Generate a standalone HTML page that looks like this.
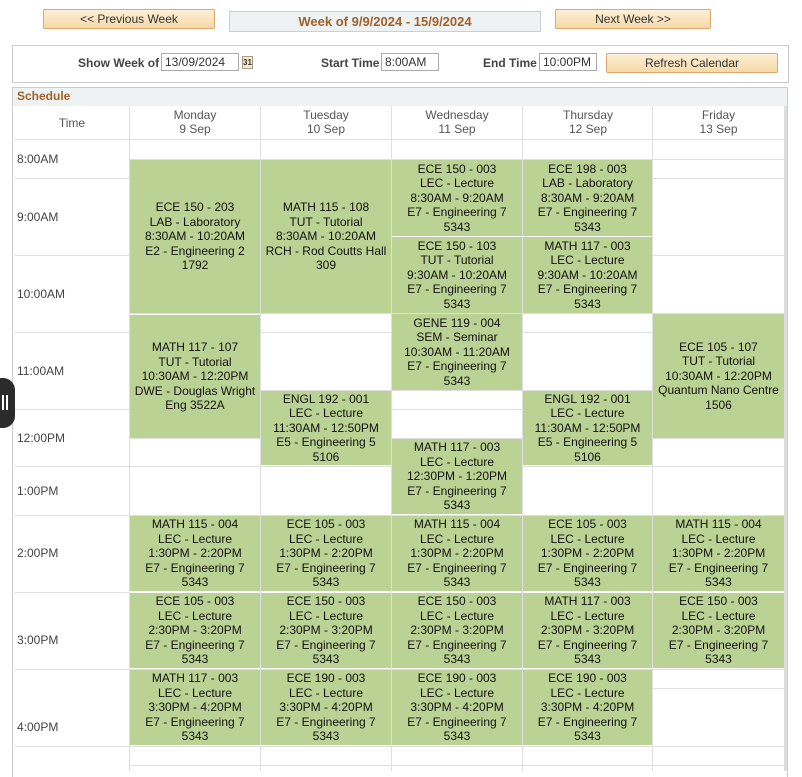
<!DOCTYPE html>
<html><head><meta charset="utf-8"><style>
*{box-sizing:border-box;margin:0;padding:0}
body{width:802px;height:771px;overflow:hidden;background:#fff;font-family:"Liberation Sans",Arial,sans-serif;position:relative;color:#333}
.btn{position:absolute;height:20px;background:linear-gradient(#fdf0d8,#f7d9a8);border:1px solid #e0a66a;border-radius:2px;font-size:12px;text-align:center;line-height:18px;color:#333}
.abs{position:absolute}
.lbl{position:absolute;font-size:12px;font-weight:bold;color:#444}
.inp{position:absolute;height:18px;border:1px solid #aaa;font-size:12px;line-height:16px;padding-left:3px;color:#333}
.hl{position:absolute;height:1px;background:#dfdfdf}
.vl{position:absolute;width:1px;background:#dfdfdf}
.ev{position:absolute;background:#bad293;display:flex;flex-direction:column;justify-content:center;align-items:center;font-size:12px;line-height:14.5px;color:#111;text-align:center}
.t{position:absolute;left:17px;font-size:12px;color:#444}
.dh{position:absolute;top:108px;font-size:12px;line-height:14px;color:#555;text-align:center}
</style></head><body>
<div class="btn" style="left:43px;top:9px;width:172px">&lt;&lt; Previous Week</div>
<div class="abs" style="left:229px;top:11px;width:312px;height:21px;background:#eff2f3;border:1px solid #ccd;text-align:center;font-size:13px;font-weight:bold;color:#a0612a;line-height:19px">Week of 9/9/2024 - 15/9/2024</div>
<div class="btn" style="left:555px;top:9px;width:156px">Next Week &gt;&gt;</div>

<div class="abs" style="left:12px;top:45px;width:777px;height:38px;border:1px solid #ccc"></div>
<div class="lbl" style="left:78px;top:56px">Show Week of</div>
<div class="inp" style="left:161px;top:53px;width:78px">13/09/2024</div>
<div class="abs" style="left:242px;top:56px;width:11px;height:13px;border:1px solid #a98;background:#f4edc4;font-size:8px;font-weight:bold;line-height:11px;text-align:center">31</div>
<div class="lbl" style="left:321px;top:56px">Start Time</div>
<div class="inp" style="left:381px;top:53px;width:58px">8:00AM</div>
<div class="lbl" style="left:483px;top:56px">End Time</div>
<div class="inp" style="left:539px;top:53px;width:58px">10:00PM</div>
<div class="btn" style="left:606px;top:53px;width:172px;height:20px">Refresh Calendar</div>

<div class="abs" style="left:12px;top:87px;width:776px;height:690px;border:1px solid #ccc;border-bottom:none"></div>
<div class="abs" style="left:13px;top:88px;width:774px;height:18px;background:#eff2f3"></div>
<div class="abs" style="left:17px;top:89px;font-size:12px;font-weight:bold;color:#a0612a">Schedule</div>
<div class="abs" style="left:784px;top:106px;width:3px;height:665px;background:#ddd"></div>

<div class="vl" style="left:129px;top:106px;height:665px"></div>
<div class="vl" style="left:260px;top:106px;height:665px"></div>
<div class="vl" style="left:391px;top:106px;height:665px"></div>
<div class="vl" style="left:522px;top:106px;height:665px"></div>
<div class="vl" style="left:652px;top:106px;height:665px"></div>

<div class="hl" style="left:15px;width:114px;top:139px"></div>
<div class="hl" style="left:15px;width:114px;top:178px"></div>
<div class="hl" style="left:15px;width:114px;top:255px"></div>
<div class="hl" style="left:15px;width:114px;top:332px"></div>
<div class="hl" style="left:15px;width:114px;top:409px"></div>
<div class="hl" style="left:15px;width:114px;top:466px"></div>
<div class="hl" style="left:15px;width:114px;top:515px"></div>
<div class="hl" style="left:15px;width:114px;top:592px"></div>
<div class="hl" style="left:15px;width:114px;top:669px"></div>
<div class="hl" style="left:15px;width:114px;top:746px"></div>
<div class="hl" style="left:129px;width:655px;top:139px"></div>
<div class="hl" style="left:129px;width:655px;top:159px"></div>
<div class="hl" style="left:129px;width:655px;top:178px"></div>
<div class="hl" style="left:129px;width:655px;top:255px"></div>
<div class="hl" style="left:129px;width:655px;top:313px"></div>
<div class="hl" style="left:129px;width:655px;top:332px"></div>
<div class="hl" style="left:129px;width:655px;top:390px"></div>
<div class="hl" style="left:129px;width:655px;top:409px"></div>
<div class="hl" style="left:129px;width:655px;top:438px"></div>
<div class="hl" style="left:129px;width:655px;top:466px"></div>
<div class="hl" style="left:129px;width:655px;top:515px"></div>
<div class="hl" style="left:129px;width:655px;top:669px"></div>
<div class="hl" style="left:129px;width:655px;top:688px"></div>
<div class="hl" style="left:129px;width:655px;top:746px"></div>
<div class="hl" style="left:129px;width:655px;top:765px"></div>

<div class="dh" style="left:15px;width:114px;top:116px">Time</div>
<div class="dh" style="left:130px;width:130px">Monday<br>9 Sep</div>
<div class="dh" style="left:261px;width:130px">Tuesday<br>10 Sep</div>
<div class="dh" style="left:392px;width:130px">Wednesday<br>11 Sep</div>
<div class="dh" style="left:523px;width:130px">Thursday<br>12 Sep</div>
<div class="dh" style="left:653px;width:131px">Friday<br>13 Sep</div>

<div class="t" style="top:152px">8:00AM</div>
<div class="t" style="top:210px">9:00AM</div>
<div class="t" style="top:287px">10:00AM</div>
<div class="t" style="top:364px">11:00AM</div>
<div class="t" style="top:431px">12:00PM</div>
<div class="t" style="top:484px">1:00PM</div>
<div class="t" style="top:546px">2:00PM</div>
<div class="t" style="top:633px">3:00PM</div>
<div class="t" style="top:720px">4:00PM</div>

<div class="ev" style="left:130px;width:130px;top:160px;height:153px">ECE 150 - 203<br>LAB - Laboratory<br>8:30AM - 10:20AM<br>E2 - Engineering 2<br>1792</div>
<div class="ev" style="left:130px;width:130px;top:315px;height:123px">MATH 117 - 107<br>TUT - Tutorial<br>10:30AM - 12:20PM<br>DWE - Douglas Wright<br>Eng 3522A</div>
<div class="ev" style="left:130px;width:130px;top:516px;height:75px">MATH 115 - 004<br>LEC - Lecture<br>1:30PM - 2:20PM<br>E7 - Engineering 7<br>5343</div>
<div class="ev" style="left:130px;width:130px;top:593px;height:75px">ECE 105 - 003<br>LEC - Lecture<br>2:30PM - 3:20PM<br>E7 - Engineering 7<br>5343</div>
<div class="ev" style="left:130px;width:130px;top:670px;height:75px">MATH 117 - 003<br>LEC - Lecture<br>3:30PM - 4:20PM<br>E7 - Engineering 7<br>5343</div>
<div class="ev" style="left:261px;width:130px;top:160px;height:153px">MATH 115 - 108<br>TUT - Tutorial<br>8:30AM - 10:20AM<br>RCH - Rod Coutts Hall<br>309</div>
<div class="ev" style="left:261px;width:130px;top:391px;height:74px">ENGL 192 - 001<br>LEC - Lecture<br>11:30AM - 12:50PM<br>E5 - Engineering 5<br>5106</div>
<div class="ev" style="left:261px;width:130px;top:516px;height:75px">ECE 105 - 003<br>LEC - Lecture<br>1:30PM - 2:20PM<br>E7 - Engineering 7<br>5343</div>
<div class="ev" style="left:261px;width:130px;top:593px;height:75px">ECE 150 - 003<br>LEC - Lecture<br>2:30PM - 3:20PM<br>E7 - Engineering 7<br>5343</div>
<div class="ev" style="left:261px;width:130px;top:670px;height:75px">ECE 190 - 003<br>LEC - Lecture<br>3:30PM - 4:20PM<br>E7 - Engineering 7<br>5343</div>
<div class="ev" style="left:392px;width:130px;top:160px;height:76px">ECE 150 - 003<br>LEC - Lecture<br>8:30AM - 9:20AM<br>E7 - Engineering 7<br>5343</div>
<div class="ev" style="left:392px;width:130px;top:237px;height:76px">ECE 150 - 103<br>TUT - Tutorial<br>9:30AM - 10:20AM<br>E7 - Engineering 7<br>5343</div>
<div class="ev" style="left:392px;width:130px;top:314px;height:76px">GENE 119 - 004<br>SEM - Seminar<br>10:30AM - 11:20AM<br>E7 - Engineering 7<br>5343</div>
<div class="ev" style="left:392px;width:130px;top:439px;height:75px">MATH 117 - 003<br>LEC - Lecture<br>12:30PM - 1:20PM<br>E7 - Engineering 7<br>5343</div>
<div class="ev" style="left:392px;width:130px;top:516px;height:75px">MATH 115 - 004<br>LEC - Lecture<br>1:30PM - 2:20PM<br>E7 - Engineering 7<br>5343</div>
<div class="ev" style="left:392px;width:130px;top:593px;height:75px">ECE 150 - 003<br>LEC - Lecture<br>2:30PM - 3:20PM<br>E7 - Engineering 7<br>5343</div>
<div class="ev" style="left:392px;width:130px;top:670px;height:75px">ECE 190 - 003<br>LEC - Lecture<br>3:30PM - 4:20PM<br>E7 - Engineering 7<br>5343</div>
<div class="ev" style="left:523px;width:129px;top:160px;height:76px">ECE 198 - 003<br>LAB - Laboratory<br>8:30AM - 9:20AM<br>E7 - Engineering 7<br>5343</div>
<div class="ev" style="left:523px;width:129px;top:237px;height:76px">MATH 117 - 003<br>LEC - Lecture<br>9:30AM - 10:20AM<br>E7 - Engineering 7<br>5343</div>
<div class="ev" style="left:523px;width:129px;top:391px;height:74px">ENGL 192 - 001<br>LEC - Lecture<br>11:30AM - 12:50PM<br>E5 - Engineering 5<br>5106</div>
<div class="ev" style="left:523px;width:129px;top:516px;height:75px">ECE 105 - 003<br>LEC - Lecture<br>1:30PM - 2:20PM<br>E7 - Engineering 7<br>5343</div>
<div class="ev" style="left:523px;width:129px;top:593px;height:75px">MATH 117 - 003<br>LEC - Lecture<br>2:30PM - 3:20PM<br>E7 - Engineering 7<br>5343</div>
<div class="ev" style="left:523px;width:129px;top:670px;height:75px">ECE 190 - 003<br>LEC - Lecture<br>3:30PM - 4:20PM<br>E7 - Engineering 7<br>5343</div>
<div class="ev" style="left:653px;width:131px;top:314px;height:124px">ECE 105 - 107<br>TUT - Tutorial<br>10:30AM - 12:20PM<br>Quantum Nano Centre<br>1506</div>
<div class="ev" style="left:653px;width:131px;top:516px;height:75px">MATH 115 - 004<br>LEC - Lecture<br>1:30PM - 2:20PM<br>E7 - Engineering 7<br>5343</div>
<div class="ev" style="left:653px;width:131px;top:593px;height:75px">ECE 150 - 003<br>LEC - Lecture<br>2:30PM - 3:20PM<br>E7 - Engineering 7<br>5343</div>

<div class="abs" style="left:-10px;top:378px;width:25px;height:50px;background:#2b2b2b;border-radius:12px"></div>
<div class="abs" style="left:2px;top:395px;width:2px;height:15px;background:#fff"></div>
<div class="abs" style="left:6px;top:395px;width:2px;height:15px;background:#fff"></div>
</body></html>
